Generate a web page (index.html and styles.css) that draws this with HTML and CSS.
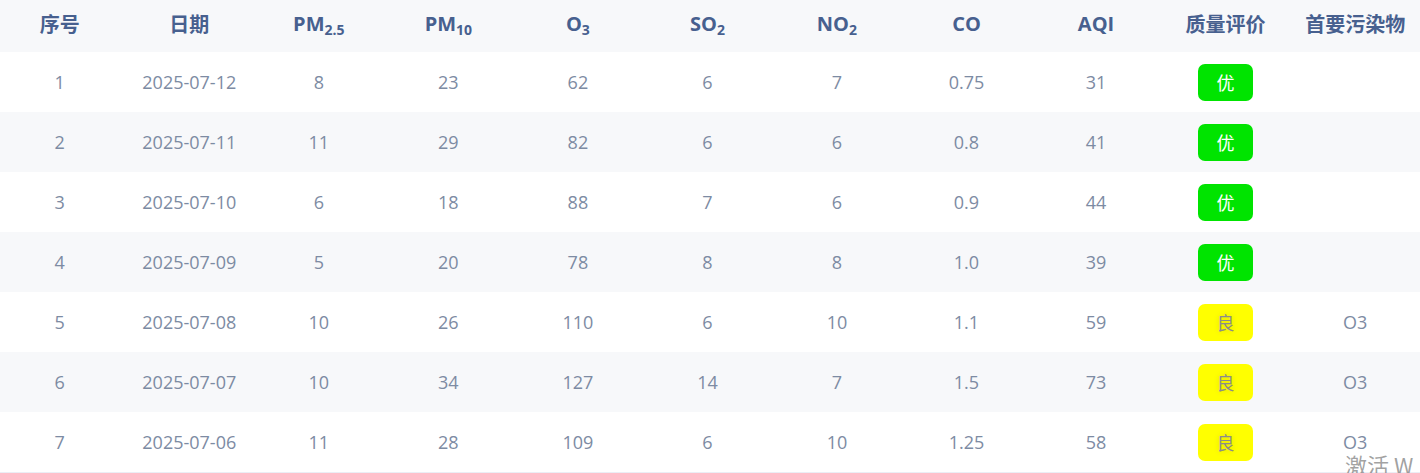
FILE: index.html
```html
<!DOCTYPE html>
<html lang="zh">
<head>
<meta charset="utf-8">
<link rel="stylesheet" href="styles.css">
</head>
<body>
<table class="aq">
  <thead>
    <tr>
      <th>序号</th><th>日期</th><th>PM<sub>2.5</sub></th><th>PM<sub>10</sub></th><th>O<sub>3</sub></th><th>SO<sub>2</sub></th><th>NO<sub>2</sub></th><th>CO</th><th>AQI</th><th>质量评价</th><th>首要污染物</th>
    </tr>
  </thead>
  <tbody>
    <tr><td>1</td><td>2025-07-12</td><td>8</td><td>23</td><td>62</td><td>6</td><td>7</td><td>0.75</td><td>31</td><td><span class="badge good">优</span></td><td></td></tr>
    <tr><td>2</td><td>2025-07-11</td><td>11</td><td>29</td><td>82</td><td>6</td><td>6</td><td>0.8</td><td>41</td><td><span class="badge good">优</span></td><td></td></tr>
    <tr><td>3</td><td>2025-07-10</td><td>6</td><td>18</td><td>88</td><td>7</td><td>6</td><td>0.9</td><td>44</td><td><span class="badge good">优</span></td><td></td></tr>
    <tr><td>4</td><td>2025-07-09</td><td>5</td><td>20</td><td>78</td><td>8</td><td>8</td><td>1.0</td><td>39</td><td><span class="badge good">优</span></td><td></td></tr>
    <tr><td>5</td><td>2025-07-08</td><td>10</td><td>26</td><td>110</td><td>6</td><td>10</td><td>1.1</td><td>59</td><td><span class="badge fair">良</span></td><td>O3</td></tr>
    <tr><td>6</td><td>2025-07-07</td><td>10</td><td>34</td><td>127</td><td>14</td><td>7</td><td>1.5</td><td>73</td><td><span class="badge fair">良</span></td><td>O3</td></tr>
    <tr><td>7</td><td>2025-07-06</td><td>11</td><td>28</td><td>109</td><td>6</td><td>10</td><td>1.25</td><td>58</td><td><span class="badge fair">良</span></td><td>O3</td></tr>
  </tbody>
</table>
<div class="watermark">激活 W</div>
</body>
</html>
```

FILE: styles.css
```css
html, body {
  margin: 0;
  padding: 0;
  background: #ffffff;
  overflow: hidden;
}
body {
  width: 1420px;
  height: 473px;
  position: relative;
  font-family: "Open Sans", "Noto Sans CJK SC", sans-serif;
}
.aq {
  width: 1425px;
  margin-left: -5px;
  border-collapse: collapse;
  table-layout: fixed;
  border-bottom: 1px solid #ebeef5;
}
.aq th {
  height: 52px;
  padding: 0 0 5px 0;
  background: #f7f8fa;
  color: #47608f;
  font-family: "Open Sans", "Noto Sans CJK SC", sans-serif;
  font-weight: 700;
  font-size: 20px;
  text-align: center;
  vertical-align: middle;
  box-sizing: border-box;
  white-space: nowrap;
}
.aq th sub {
  font-size: 14px;
  vertical-align: -4px;
  line-height: 0;
}
.aq td {
  height: 60px;
  padding: 0;
  color: #7d8ba3;
  font-size: 18px;
  text-align: center;
  vertical-align: middle;
  font-family: "Open Sans", "Noto Sans CJK SC", sans-serif;
}
.aq tbody tr:nth-child(even) td {
  background: #f7f8fa;
}
.badge {
  display: inline-flex;
  align-items: center;
  justify-content: center;
  width: 55px;
  height: 37px;
  border-radius: 7px;
  font-size: 18px;
  font-family: "Noto Sans CJK SC", sans-serif;
  vertical-align: middle;
}
.badge.good {
  background: #00e400;
  color: #ffffff;
}
.badge.fair {
  background: #ffff00;
  color: #8c8c8c;
  text-shadow: 0 0 6px rgba(0, 0, 0, 0.15);
}
.watermark {
  position: absolute;
  left: 1345px;
  top: 453px;
  font-family: "Noto Sans CJK SC", sans-serif;
  font-size: 22px;
  color: rgba(120, 120, 120, 0.7);
  white-space: nowrap;
  line-height: 1;
}
```
